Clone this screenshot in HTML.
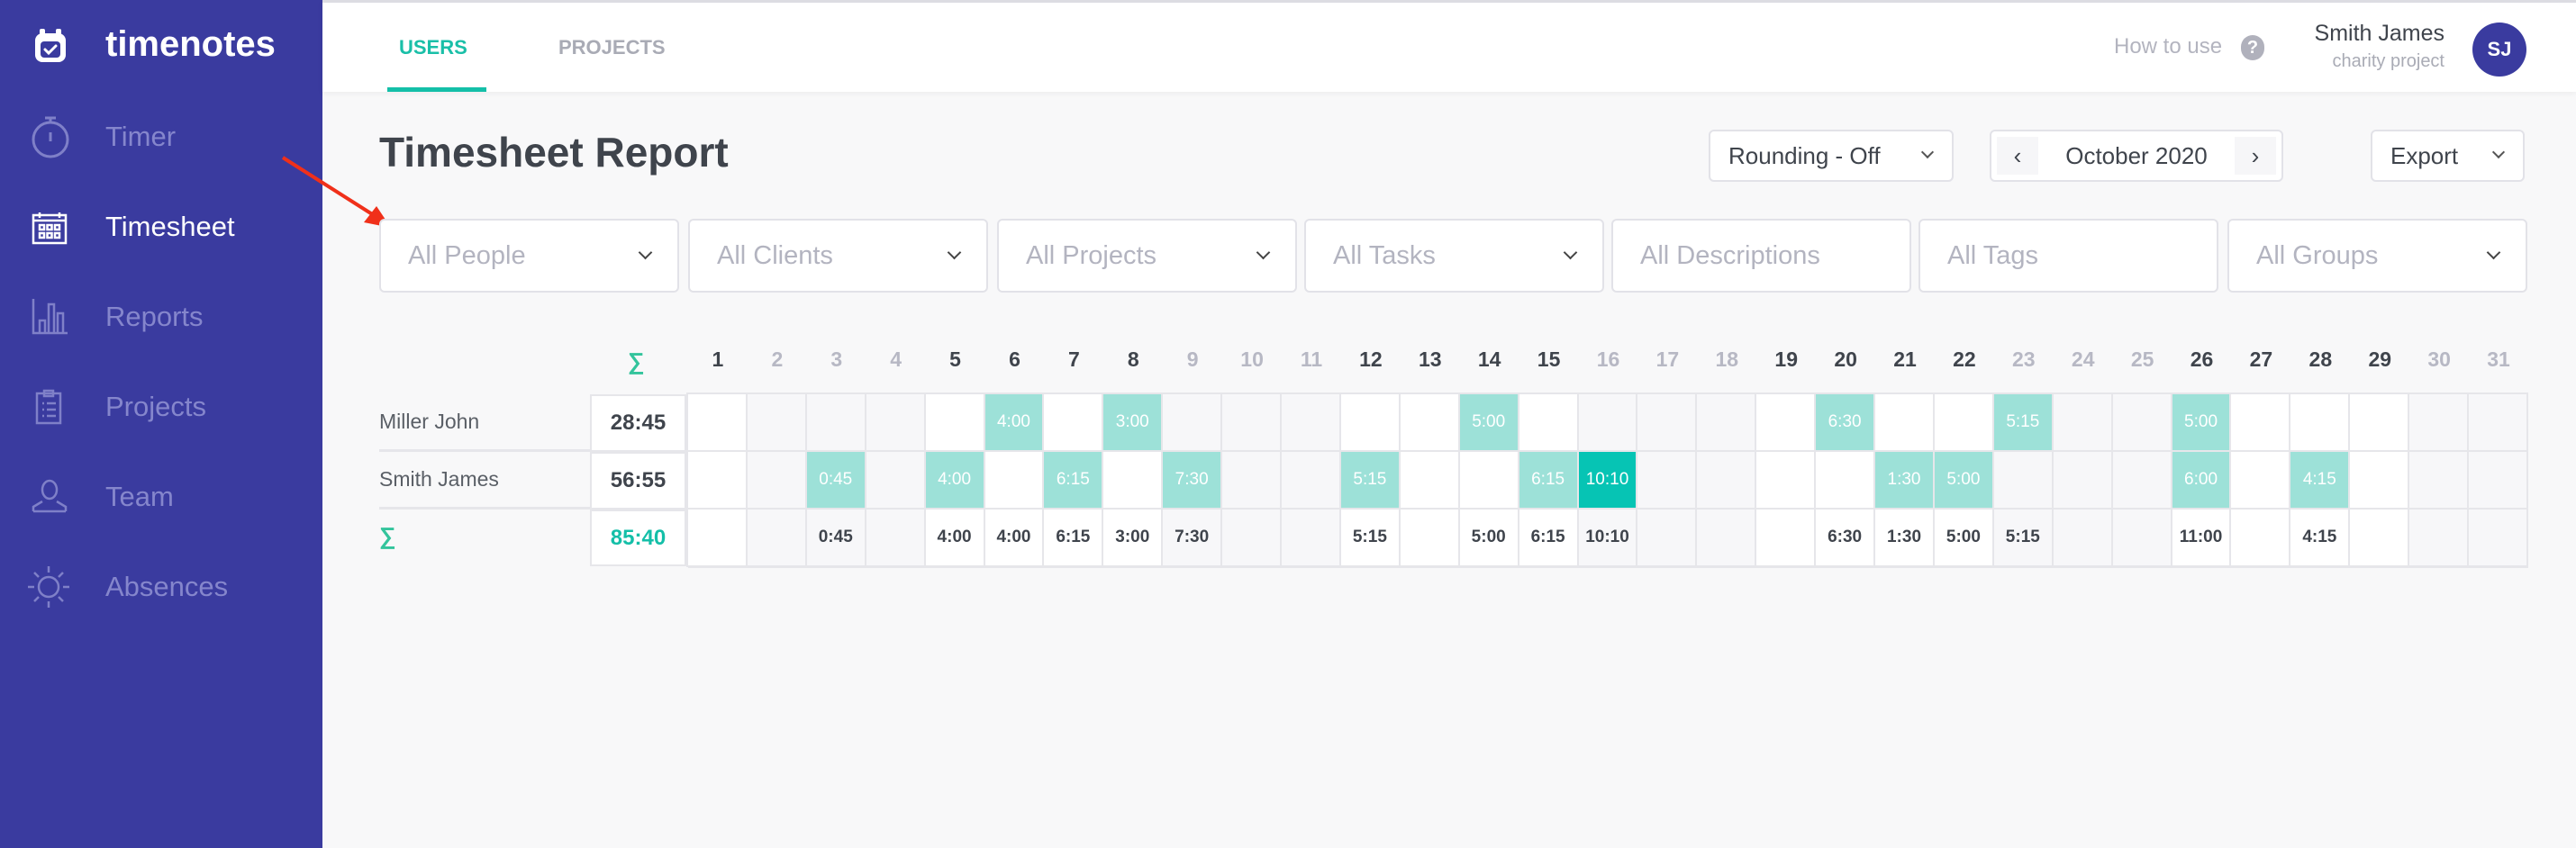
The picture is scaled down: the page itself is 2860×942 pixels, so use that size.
<!DOCTYPE html>
<html><head><meta charset="utf-8"><style>
*{box-sizing:border-box;margin:0;padding:0}
body{width:2860px;height:942px;overflow:hidden;background:#f8f8f9;font-family:"Liberation Sans",sans-serif;position:relative;color:#454b53}
.side{position:absolute;left:0;top:0;width:358px;height:942px;background:#3a3b9f}
.abs{position:absolute}
.nav{position:absolute;left:117px;font-size:31px;color:#8586cc}
.top{position:absolute;left:358px;top:0;width:2502px;height:102px;background:#fff;box-shadow:0 2px 6px rgba(0,0,0,.05);border-top:3px solid #dcdce2}
.box{position:absolute;background:#fff;border:2px solid #e2e2e8;border-radius:6px}
.f{position:absolute;top:243px;height:82px;width:333px;background:#fff;border:2px solid #e2e2e8;border-radius:6px;font-size:29px;color:#b3b4c0;padding-left:30px;line-height:78px}
.chev{position:absolute;right:30px;top:30px;width:12px;height:12px;border-right:2px solid #555;border-bottom:2px solid #555;transform:rotate(45deg)}
.hdr{position:absolute;left:764px;top:386px;width:2043px;display:grid;grid-template-columns:repeat(31,1fr);font-size:23px;font-weight:bold;color:#3f444c;text-align:center}
.hdr .g{color:#b7b8c4}
.grid{position:absolute;left:764px;width:2043px;height:64px;display:grid;grid-template-columns:repeat(31,1fr)}
.grid div{background:#fff;border-right:2px solid #e6e6ea;border-bottom:3px solid #e6e6ea;font-size:19px;font-weight:bold;color:#3f444c;text-align:center;line-height:62px}
.grid div.g{background:#f7f7f9}
.grid div.t{background:#9de1d8;color:#fff;font-weight:normal}
.grid div.d{background:#06c4b4;color:#fff;font-weight:normal}
.sum{position:absolute;left:655px;width:107px;height:64px;background:#fff;border:2px solid #e6e6ea;font-size:24px;font-weight:bold;text-align:center;line-height:60px;color:#3f444c}
.name{position:absolute;left:421px;width:234px;height:64px;font-size:23px;color:#5a5f66;line-height:60px;border-bottom:3px solid #e6e6ea}
</style></head><body>
<div class="side">
<svg class="abs" style="left:36px;top:30px" width="40" height="42" viewBox="0 0 40 42"><rect x="3" y="7" width="34" height="32" rx="8" fill="#fff"/><rect x="8" y="2" width="6" height="8" rx="2" fill="#fff"/><rect x="26" y="2" width="6" height="8" rx="2" fill="#fff"/><rect x="9" y="16" width="22" height="18" rx="4" fill="#3a3b9f"/><path d="M14 25l4 4 8-8" stroke="#fff" stroke-width="3" fill="none" stroke-linecap="round"/></svg>
<div class="abs" style="left:117px;top:27px;font-size:40px;font-weight:bold;color:#fff">timenotes</div>
<svg class="abs" style="left:33px;top:127px" width="46" height="50" viewBox="0 0 46 50" stroke="#7f80c8" stroke-width="3" fill="none"><circle cx="23" cy="28" r="19"/><path d="M17 4h12M23 4v5M23 20v10"/></svg>
<div class="nav" style="top:134px">Timer</div>
<svg class="abs" style="left:35px;top:234px" width="40" height="38" viewBox="0 0 40 38" stroke="#fff" stroke-width="2.5" fill="none"><rect x="2" y="5" width="36" height="31"/><path d="M2 11h36M9 2v6M31 2v6"/><path d="M9 16h5v5H9zM17.5 16h5v5h-5zM26 16h5v5h-5zM9 25h5v5H9zM17.5 25h5v5h-5zM26 25h5v5h-5z"/></svg>
<div class="nav" style="top:234px;color:#fff">Timesheet</div>
<svg class="abs" style="left:35px;top:332px" width="40" height="40" viewBox="0 0 40 40" stroke="#7f80c8" stroke-width="2.5" fill="none"><path d="M2 0v38h38M9 38V24h6v14M19 38V6h6v32M29 38V16h6v22"/></svg>
<div class="nav" style="top:334px">Reports</div>
<svg class="abs" style="left:38px;top:432px" width="32" height="40" viewBox="0 0 32 40" stroke="#7f80c8" stroke-width="2.5" fill="none"><rect x="3" y="5" width="26" height="33"/><path d="M11 2h10v6H11zM9 16h2M14 16h10M9 23h2M14 23h10M9 30h2M14 30h10"/></svg>
<div class="nav" style="top:434px">Projects</div>
<svg class="abs" style="left:35px;top:532px" width="40" height="38" viewBox="0 0 40 38" stroke="#7f80c8" stroke-width="2.5" fill="none"><ellipse cx="20" cy="12" rx="8" ry="10"/><path d="M2 36v-5l10-6M38 36v-5l-10-6M2 36h36"/></svg>
<div class="nav" style="top:534px">Team</div>
<svg class="abs" style="left:29px;top:627px" width="50" height="50" viewBox="0 0 50 50" stroke="#7f80c8" stroke-width="2.5" fill="none"><circle cx="25" cy="25" r="11"/><path d="M25 2v7M25 41v7M2 25h7M41 25h7M9 9l5 5M36 36l5 5M41 9l-5 5M9 41l5-5"/></svg>
<div class="nav" style="top:634px">Absences</div>
</div>
<div class="top">
<div class="abs" style="left:85px;top:37px;font-size:22px;font-weight:bold;color:#1abfa8">USERS</div>
<div class="abs" style="left:72px;top:94px;width:110px;height:5px;background:#14bfa8"></div>
<div class="abs" style="left:262px;top:37px;font-size:22px;font-weight:bold;color:#a9abb5">PROJECTS</div>
<div class="abs" style="left:1989px;top:35px;font-size:24px;color:#b3b4bf">How to use</div>
<div class="abs" style="left:2130px;top:36px;width:26px;height:28px;border-radius:13px;background:#b0b1bc;color:#fff;font-size:20px;font-weight:bold;text-align:center;line-height:28px">?</div>
<div class="abs" style="left:2150px;top:20px;width:206px;text-align:right;font-size:25px;color:#3f444c">Smith James</div>
<div class="abs" style="left:2150px;top:54px;width:206px;text-align:right;font-size:20px;color:#a9abb5">charity project</div>
<div class="abs" style="left:2387px;top:22px;width:60px;height:60px;border-radius:30px;background:#3a3b9f;color:#fff;font-size:22px;font-weight:bold;text-align:center;line-height:60px">SJ</div>
</div>
<div class="abs" style="left:421px;top:142px;font-size:46px;font-weight:bold;color:#3f444c">Timesheet Report</div>
<div class="box" style="left:1897px;top:144px;width:272px;height:58px;font-size:26px;color:#3f444c;padding-left:20px;line-height:54px">Rounding - Off<span class="chev" style="top:18px;right:22px;width:10px;height:10px"></span></div>
<div class="box" style="left:2209px;top:144px;width:326px;height:58px;font-size:26px;color:#3f444c;text-align:center;line-height:54px"><div class="abs" style="left:6px;top:6px;width:46px;height:42px;background:#f6f6f8;line-height:42px">‹</div>October 2020<div class="abs" style="right:6px;top:6px;width:46px;height:42px;background:#f6f6f8;line-height:42px">›</div></div>
<div class="box" style="left:2632px;top:144px;width:171px;height:58px;font-size:26px;color:#3f444c;padding-left:20px;line-height:54px">Export<span class="chev" style="top:18px;right:22px;width:10px;height:10px"></span></div>
<svg class="abs" style="left:300px;top:165px" width="150" height="100"><line x1="14" y1="10" x2="118" y2="76" stroke="#f0301a" stroke-width="4"/><path d="M134 88L104 82L118 64Z" fill="#f0301a"/></svg>
<div class="f" style="left:421px">All People<span class="chev" style="width:11px;height:11px;border-color:#444"></span></div>
<div class="f" style="left:764px">All Clients<span class="chev" style="width:11px;height:11px;border-color:#444"></span></div>
<div class="f" style="left:1107px">All Projects<span class="chev" style="width:11px;height:11px;border-color:#444"></span></div>
<div class="f" style="left:1448px">All Tasks<span class="chev" style="width:11px;height:11px;border-color:#444"></span></div>
<div class="f" style="left:1789px">All Descriptions</div>
<div class="f" style="left:2130px">All Tags</div>
<div class="f" style="left:2473px">All Groups<span class="chev" style="width:11px;height:11px;border-color:#444"></span></div>
<div class="abs" style="left:697px;top:386px;font-size:26px;font-weight:bold;color:#33c49c">∑</div>
<div class="hdr"><span>1</span><span class="g">2</span><span class="g">3</span><span class="g">4</span><span>5</span><span>6</span><span>7</span><span>8</span><span class="g">9</span><span class="g">10</span><span class="g">11</span><span>12</span><span>13</span><span>14</span><span>15</span><span class="g">16</span><span class="g">17</span><span class="g">18</span><span>19</span><span>20</span><span>21</span><span>22</span><span class="g">23</span><span class="g">24</span><span class="g">25</span><span>26</span><span>27</span><span>28</span><span>29</span><span class="g">30</span><span class="g">31</span></div>
<div class="name" style="top:438px">Miller John</div>
<div class="name" style="top:502px">Smith James</div>
<div class="abs" style="left:421px;top:580px;font-size:26px;font-weight:bold;color:#33c49c">∑</div>
<div class="sum" style="top:438px">28:45</div>
<div class="sum" style="top:502px">56:55</div>
<div class="sum" style="top:566px;color:#14bfa8;height:63px">85:40</div>
<div style="position:absolute;left:764px;top:436px;width:2043px;height:2px;background:#e6e6ea"></div>
<div style="position:absolute;left:762px;top:436px;width:2px;height:194px;background:#e6e6ea"></div>
<div class="grid" style="top:438px"><div></div><div class="g"></div><div class="g"></div><div class="g"></div><div></div><div class="t">4:00</div><div></div><div class="t">3:00</div><div class="g"></div><div class="g"></div><div class="g"></div><div></div><div></div><div class="t">5:00</div><div></div><div class="g"></div><div class="g"></div><div class="g"></div><div></div><div class="t">6:30</div><div></div><div></div><div class="t">5:15</div><div class="g"></div><div class="g"></div><div class="t">5:00</div><div></div><div></div><div></div><div class="g"></div><div class="g"></div></div>
<div class="grid" style="top:502px"><div></div><div class="g"></div><div class="t">0:45</div><div class="g"></div><div class="t">4:00</div><div></div><div class="t">6:15</div><div></div><div class="t">7:30</div><div class="g"></div><div class="g"></div><div class="t">5:15</div><div></div><div></div><div class="t">6:15</div><div class="d">10:10</div><div class="g"></div><div class="g"></div><div></div><div></div><div class="t">1:30</div><div class="t">5:00</div><div class="g"></div><div class="g"></div><div class="g"></div><div class="t">6:00</div><div></div><div class="t">4:15</div><div></div><div class="g"></div><div class="g"></div></div>
<div class="grid" style="top:566px"><div></div><div class="g"></div><div class="g">0:45</div><div class="g"></div><div>4:00</div><div>4:00</div><div>6:15</div><div>3:00</div><div class="g">7:30</div><div class="g"></div><div class="g"></div><div>5:15</div><div></div><div>5:00</div><div>6:15</div><div class="g">10:10</div><div class="g"></div><div class="g"></div><div></div><div>6:30</div><div>1:30</div><div>5:00</div><div class="g">5:15</div><div class="g"></div><div class="g"></div><div>11:00</div><div></div><div>4:15</div><div></div><div class="g"></div><div class="g"></div></div>
</body></html>
